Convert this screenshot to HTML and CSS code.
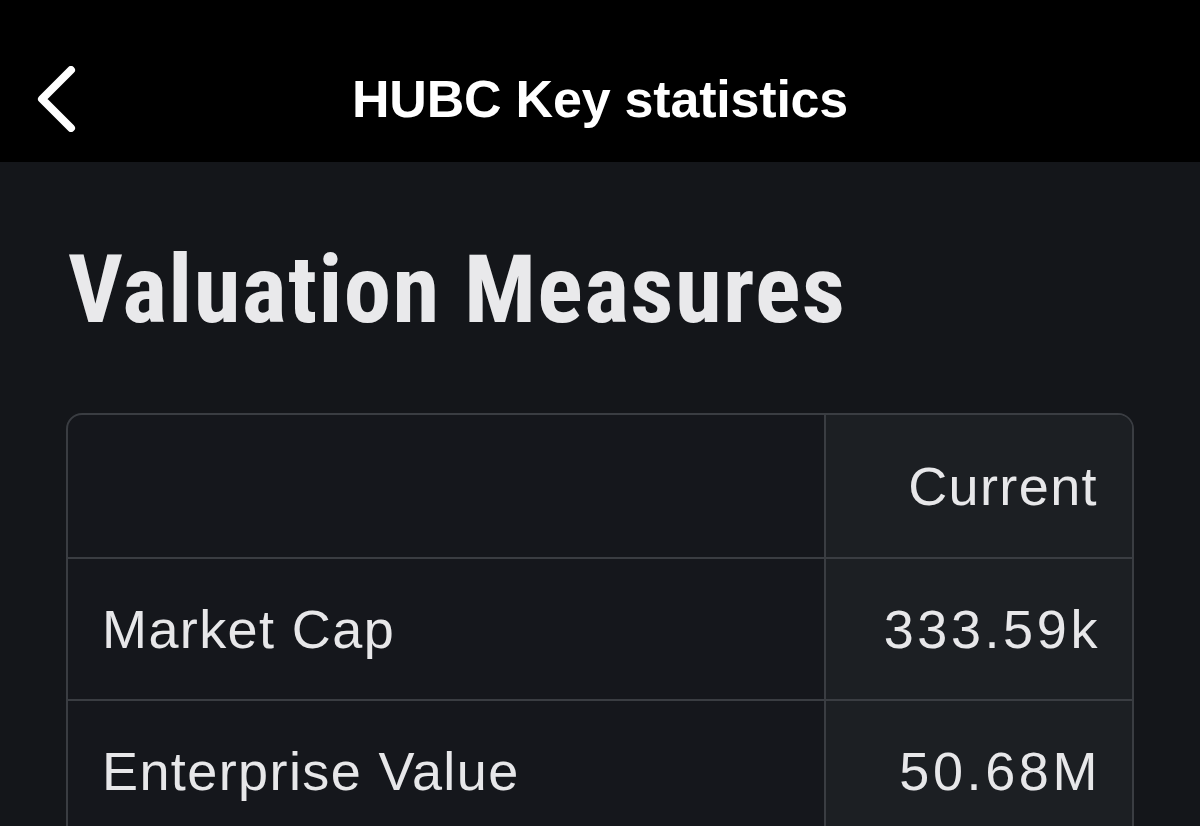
FILE: index.html
```html
<!DOCTYPE html>
<html lang="en">
<head>
<meta charset="utf-8">
<title>HUBC Key statistics</title>
<link rel="stylesheet" href="styles.css">
</head>
<body>
  <header class="topbar">
    <div class="topbar-side">
      <button class="back" aria-label="Back">
        <svg viewBox="0 0 44 66" width="44" height="66">
          <path d="M37 4 L8 33 L37 62" fill="none" stroke="#fff" stroke-width="8" stroke-linecap="round" stroke-linejoin="round"/>
        </svg>
      </button>
    </div>
    <h1 class="topbar-title">HUBC Key statistics</h1>
    <div class="topbar-side"></div>
  </header>

  <main class="content">
    <h2 class="section-title">Valuation Measures</h2>

    <div class="stats">
      <div class="cell label head"></div>
      <div class="cell value head">Current</div>

      <div class="cell label">Market Cap</div>
      <div class="cell value num">333.59k</div>

      <div class="cell label">Enterprise Value</div>
      <div class="cell value num">50.68M</div>
    </div>
  </main>
</body>
</html>
```

FILE: styles.css
```css
html, body {
  margin: 0;
  padding: 0;
}

body {
  background: #14161a;
  color: #e7e7e9;
  font-family: "Liberation Sans", Arial, sans-serif;
  height: 826px;
  overflow: hidden;
}

/* top navigation bar */
.topbar {
  height: 162px;
  box-sizing: border-box;
  padding-top: 36px;
  background: #000;
  display: grid;
  grid-template-columns: 1fr auto 1fr;
  align-items: center;
}

.topbar-side {
  display: flex;
  align-items: center;
}

.back {
  background: none;
  border: 0;
  padding: 0 0 0 34px;
  margin: 0;
  display: flex;
  cursor: pointer;
}

.topbar-title {
  margin: 0;
  color: #fff;
  font-size: 52px;
  font-weight: 700;
  letter-spacing: -0.2px;
}

/* page body */
.content {
  padding: 80px 66px 0 66px;
}

.section-title {
  margin: 0 0 76px 2px;
  font-family: "Liberation Sans Narrow", "Roboto Condensed", "Liberation Sans", sans-serif;
  font-stretch: condensed;
  font-weight: 700;
  font-size: 95px;
  line-height: 1;
  letter-spacing: 1.4px;
  color: #e9e9eb;
}

/* statistics table */
.stats {
  display: grid;
  grid-template-columns: 1fr 308px;
  grid-auto-rows: 142px;
  border: 2px solid #3a3d42;
  border-radius: 16px;
  overflow: hidden;
  background: #15171c;
}

.cell {
  display: flex;
  align-items: center;
  padding: 0 34px;
  font-size: 54px;
  letter-spacing: 1.4px;
  border-top: 2px solid #3a3d42;
}

.cell.head {
  border-top: 0;
}

.value {
  justify-content: flex-end;
  background: #1c1f23;
  border-left: 2px solid #3a3d42;
  padding-right: 34px;
}

.value.num {
  letter-spacing: 3.6px;
  padding-right: 31px;
}
```
